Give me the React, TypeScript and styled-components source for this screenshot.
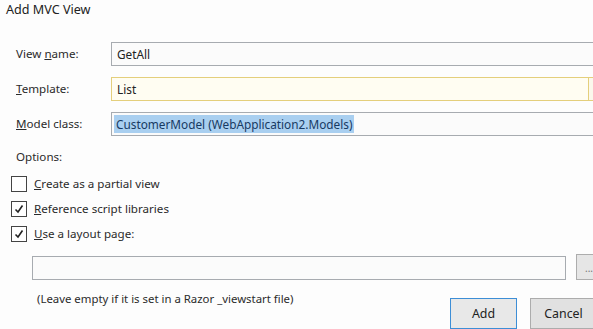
import styled, { createGlobalStyle } from "styled-components";

const Global = createGlobalStyle`
  html, body {
    margin: 0;
    padding: 0;
    background: #fdfdfd;
    overflow: hidden;
  }
  body {
    font-family: "Noto Sans", "Open Sans", sans-serif;
    color: #2b2b2b;
  }
`;

const Dialog = styled.div`
  width: 640px;
  height: 329px;
  display: flex;
  flex-direction: column;
`;

const Title = styled.div`
  font-size: 12.6px;
  line-height: 20px;
  padding-left: 6px;
  color: #222;
`;

const Fields = styled.div`
  margin-top: 22px;
  padding-left: 16px;
  display: grid;
  grid-template-columns: 95px 1fr;
  row-gap: 11px;
  align-items: center;
`;

const Label = styled.label`
  font-size: 11.6px;
  line-height: 24px;
`;

const Key = styled.span`
  text-decoration: underline;
  text-underline-offset: 1px;
`;

const Box = styled.div<{ $tone?: "plain" | "warn" }>`
  height: 24px;
  box-sizing: border-box;
  border: 1px solid ${(p) => (p.$tone === "warn" ? "#e4cf7c" : "#a7abb0")};
  background: ${(p) => (p.$tone === "warn" ? "#fffdf2" : "#fbfbfb")};
  display: flex;
  align-items: center;
  padding-left: 5px;
  font-size: 11.8px;
  color: #222;
  position: relative;
`;

const DropButton = styled.div`
  position: absolute;
  left: 476px;
  top: -1px;
  bottom: -1px;
  width: 18px;
  border: 1px solid #e4cf7c;
  background: #fbf8ec;
`;

const Selected = styled.span`
  background: #a9cff0;
  color: #173a63;
  margin-left: -3px;
  padding: 1px 2px;
`;

const Options = styled.div`
  margin-top: 12px;
  padding-left: 16px;
  font-size: 11.6px;
  line-height: 18px;
`;

const Checks = styled.div`
  margin-top: 5px;
  display: flex;
  flex-direction: column;
`;

const CheckRow = styled.div`
  height: 25px;
  display: flex;
  align-items: center;
  padding-left: 11px;
  gap: 7px;
  font-size: 11.6px;
`;

const Square = styled.span`
  width: 16px;
  height: 16px;
  box-sizing: border-box;
  border: 1px solid #444;
  background: #fff;
  display: flex;
  align-items: center;
  justify-content: center;
`;

const LayoutRow = styled.div`
  margin-top: 8px;
  padding-left: 32px;
  display: flex;
  align-items: flex-end;
  gap: 10px;
`;

const LayoutInput = styled.div`
  width: 534px;
  height: 24px;
  box-sizing: border-box;
  border: 1px solid #a7abb0;
  background: #fbfbfb;
`;

const Browse = styled.div`
  width: 26px;
  height: 26px;
  box-sizing: border-box;
  border: 1px solid #adadad;
  background: #e6e6e6;
  font-size: 10px;
  color: #777;
  display: flex;
  align-items: flex-end;
  justify-content: center;
  padding-bottom: 4px;
`;

const Footer = styled.div`
  margin-top: 10px;
  display: flex;
  align-items: flex-start;
  padding-left: 37px;
`;

const Hint = styled.div`
  font-size: 11.4px;
  line-height: 18px;
  width: 413px;
`;

const Buttons = styled.div`
  display: flex;
  gap: 13px;
  margin-top: 8px;
`;

const Button = styled.div<{ $primary?: boolean }>`
  width: 67px;
  height: 31px;
  box-sizing: border-box;
  border: 1px solid ${(p) => (p.$primary ? "#3d8ed6" : "#acacac")};
  background: ${(p) => (p.$primary ? "#e8e8e8" : "#e1e1e1")};
  font-size: 12.4px;
  color: #222;
  display: flex;
  align-items: center;
  justify-content: center;
`;

const Check = ({ on }: { on: boolean }) => (
  <Square>
    {on && (
      <svg width="12" height="12" viewBox="0 0 12 12">
        <polyline
          points="2.5,6.5 5,9 9.5,2.5"
          fill="none"
          stroke="#222"
          strokeWidth="1.6"
        />
      </svg>
    )}
  </Square>
);

export default function App() {
  return (
    <Dialog>
      <Global />
      <Title>Add MVC View</Title>
      <Fields>
        <Label>
          View <Key>n</Key>ame:
        </Label>
        <Box>GetAll</Box>
        <Label>
          <Key>T</Key>emplate:
        </Label>
        <Box $tone="warn">
          List
          <DropButton />
        </Box>
        <Label>
          <Key>M</Key>odel class:
        </Label>
        <Box>
          <Selected>CustomerModel (WebApplication2.Models)</Selected>
        </Box>
      </Fields>
      <Options>Options:</Options>
      <Checks>
        <CheckRow>
          <Check on={false} />
          <span>
            <Key>C</Key>reate as a partial view
          </span>
        </CheckRow>
        <CheckRow>
          <Check on />
          <span>
            <Key>R</Key>eference script libraries
          </span>
        </CheckRow>
        <CheckRow>
          <Check on />
          <span>
            <Key>U</Key>se a layout page:
          </span>
        </CheckRow>
      </Checks>
      <LayoutRow>
        <LayoutInput />
        <Browse>...</Browse>
      </LayoutRow>
      <Footer>
        <Hint>(Leave empty if it is set in a Razor _viewstart file)</Hint>
        <Buttons>
          <Button $primary>Add</Button>
          <Button>Cancel</Button>
        </Buttons>
      </Footer>
    </Dialog>
  );
}
